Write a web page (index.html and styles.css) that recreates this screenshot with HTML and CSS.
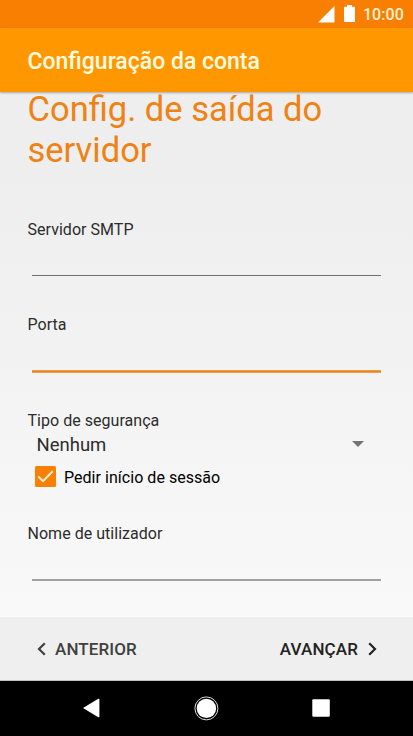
FILE: index.html
```html
<!DOCTYPE html>
<html lang="pt">
<head>
<meta charset="utf-8">
<title>Configuração da conta</title>
<link rel="stylesheet" href="styles.css">
</head>
<body>
<div class="screen">
  <div class="status-bar">
    <svg class="signal" width="17" height="17" viewBox="0 0 17 17"><path d="M16.5 0v16.5H0z"/></svg>
    <svg class="battery" width="11" height="17" viewBox="0 0 11 17"><path d="M3 0h5v1.7h2.2a.8.8 0 0 1 .8.8v13.700a.8.8 0 0 1-.8.8H.8a.8.8 0 0 1-.8-.8V2.500a.8.8 0 0 1 .8-.8H3z"/></svg>
    <span class="clock">10:00</span>
  </div>
  <header class="app-bar"><span class="title">Configuração da conta</span></header>
  <main class="content">
    <h1 class="heading">Config. de saída do<br>servidor</h1>
    <label class="field"><span class="label">Servidor SMTP</span><span class="line"></span></label>
    <label class="field"><span class="label">Porta</span><span class="line line-focus"></span></label>
    <div class="security">
      <span class="label label-type">Tipo de segurança</span>
      <div class="select"><span class="value">Nenhum</span><svg width="12" height="6" viewBox="0 0 12 6"><path d="M0 0h12L6 6z"/></svg></div>
      <div class="check"><svg width="21" height="21" viewBox="0 0 21 21"><rect width="21" height="21" rx="1.500"/><path d="M3.300 10.500l4.700 4.700 9.700-9.900"/></svg><span class="check-text">Pedir início de sessão</span></div>
    </div>
    <label class="field"><span class="label">Nome de utilizador</span><span class="line line-user"></span></label>
  </main>
  <footer class="footer">
    <div class="action previous"><svg width="9" height="14" viewBox="0 0 9 14"><path d="M7.800 1.200L2 7l5.800 5.800"/></svg><span class="prev-text">ANTERIOR</span></div>
    <div class="action next"><span class="next-text">AVANÇAR</span><svg width="9" height="14" viewBox="0 0 9 14"><path d="M1.200 1.200L7 7l-5.800 5.800"/></svg></div>
  </footer>
  <nav class="nav">
    <svg class="back" width="17" height="20" viewBox="0 0 17 20"><path d="M15.300.8a.7.7 0 0 1 1.100.6v17.200a.7.7 0 0 1-1.100.6L.8 10.600a.7.7 0 0 1 0-1.200z"/></svg>
    <svg class="home" width="26" height="26" viewBox="0 0 26 26"><circle cx="13.400" cy="13.400" r="9.700"/><circle class="ring" cx="13.400" cy="13.400" r="11.500"/></svg>
    <svg class="recent" width="18" height="18" viewBox="0 0 18 18"><rect x=".3" y=".3" width="17.500" height="17.500" rx="1"/></svg>
  </nav>
</div>
</body>
</html>
```
FILE: styles.css
```css
* { box-sizing: border-box; }
body { margin: 0; font-family: Roboto, "Liberation Sans", sans-serif; }
svg { display: block; flex: none; }
.screen { width: 413px; height: 736px; display: flex; flex-direction: column; overflow: hidden; }
.status-bar { height: 28px; flex: none; display: flex; align-items: center; justify-content: flex-end; padding-right: 9px; background: #f97f02; color: #fff2d0; }
.status-bar svg { fill: #fff; }
.signal { margin: 0 9px 0 0; }
.battery { margin: 0 8px 1px 0; }
.clock { font-size: 16px; line-height: 28px; font-weight: 500; padding-top: 1px; letter-spacing: .1px; }
.app-bar { height: 64px; flex: none; display: flex; align-items: center; padding: 3px 0 0 27.500px; background: #ff9800; color: #fffbe0; box-shadow: 0 1px 2px rgba(0,0,0,.3); position: relative; }
.title { font-size: 23px; font-weight: 500; white-space: nowrap; }
.content { height: 525px; flex: none; padding: 0 32px 0 27.500px; background: linear-gradient(#eee 0, #eee 15%, #f5f5f5 70%, #f9f9f9); }
.heading { margin: -3px 0 0; height: 127px; font-size: 34.500px; line-height: 41px; font-weight: 400; color: #ef8213; white-space: nowrap; }
.field { display: flex; flex-direction: column; height: 95px; }
.field + .field { height: 96px; }
.label { display: block; color: #2c2c2c; font-size: 16px; line-height: 28px; height: 28px; white-space: nowrap; align-self: flex-start; letter-spacing: .03px; }
.line { margin: 31px 0 0 4.500px; height: 1px; background: #717174; }
.line-focus { height: 3px; background: linear-gradient(#f4a856, #e8821a, #f4b06a); }
.line-user { height: 2px; background: #a0a0a0; }
.security { height: 113px; }
.label-type { height: 26px; }
.select { display: flex; align-items: center; justify-content: space-between; height: 24px; padding: 0 17px 0 9px; }
.select svg { fill: #737373; margin-bottom: 2px; }
.value { color: #2c2c2c; font-size: 18.500px; line-height: 24px; }
.check { display: flex; align-items: center; height: 40px; padding-left: 7.500px; gap: 8px; }
.check svg { margin-bottom: 2px; }
.check rect { fill: #fa7f05; }
.check path { fill: none; stroke: #fff2d8; stroke-width: 2; }
.check-text { color: #000; font-size: 16px; white-space: nowrap; letter-spacing: .04px; }
.footer { height: 64px; flex: none; display: flex; justify-content: space-between; padding: 0 36px 0 37px; background: #efefef; border-bottom: 1px solid #c2c2c2; }
.action { display: flex; align-items: center; font-weight: 500; font-size: 17px; letter-spacing: .12px; color: #404040; }
.action svg path { fill: none; stroke: currentColor; stroke-width: 2.200; }
.previous { gap: 9px; }
.next { gap: 10px; color: #222; }
.nav { height: 55px; flex: none; display: flex; align-items: center; background: #000; padding: 0 0 1px 83px; }
.nav svg { fill: #fff; }
.home { margin-left: 93px; }
.home .ring { fill: none; stroke: #ddd; stroke-width: 1; }
.recent { margin-left: 93px; }
```
